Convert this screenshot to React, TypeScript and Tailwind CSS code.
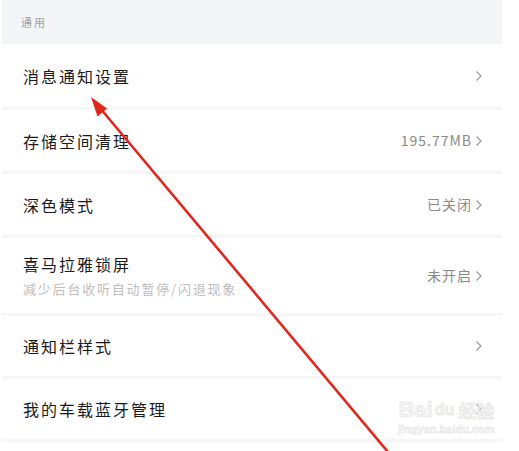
import React from 'react'

type Row = {
  title: string
  sub?: string
  value?: string
  h: string
}

const rows: Row[] = [
  { title: '消息通知设置', h: 'h-[66px]' },
  { title: '存储空间清理', value: '195.77MB', h: 'h-[64px]' },
  { title: '深色模式', value: '已关闭', h: 'h-[64px]' },
  { title: '喜马拉雅锁屏', sub: '减少后台收听自动暂停/闪退现象', value: '未开启', h: 'h-[78px]' },
  { title: '通知栏样式', h: 'h-[63px]' },
  { title: '我的车载蓝牙管理', h: 'h-[63px]' },
]

const font = { fontFamily: '"Noto Sans CJK SC", "Noto Sans", sans-serif' }

function Chevron() {
  return (
    <svg width="8" height="12" viewBox="0 0 8 12" className="shrink-0">
      <polyline points="1.5,1.5 6,6 1.5,10.5" fill="none" stroke="#9a9a9a" strokeWidth="1.2" />
    </svg>
  )
}

export default function App() {
  return (
    <div className="relative w-[519px] h-[451px] bg-white overflow-hidden" style={font}>
      <div className="ml-[2px] w-[500px]">
        <div className="h-[44px] bg-[#f4f5f7] flex items-center pl-[19px]">
          <span className="text-[11px] text-[#a0a0a0] tracking-[2px]">通用</span>
        </div>

        {rows.map((r, i) => (
          <div
            key={i}
            className={`${r.h} flex items-center justify-between pl-[21px] pr-[19px] border-b-[3px] border-[#f6f6f7]`}
          >
            <div className="flex flex-col">
              <span className="text-[16px] leading-[22px] text-[#1a1a1a] tracking-[2px]">{r.title}</span>
              {r.sub && (
                <span className="text-[13px] leading-[20px] mt-[4px] text-[#bdbdbd] tracking-[1.8px]">{r.sub}</span>
              )}
            </div>
            <div className="flex items-center gap-[3px]">
              {r.value && (
                <span className="text-[14px] text-[#8a8a8a] tracking-[1px]">{r.value}</span>
              )}
              <Chevron />
            </div>
          </div>
        ))}
      </div>

      {/* watermark */}
      <div className="absolute left-[398px] top-[398px] flex flex-col items-center pointer-events-none select-none">
        <div className="flex items-center text-[22px] leading-[24px] font-bold text-[#f4f4f4]" style={{ fontFamily: '"Liberation Sans", sans-serif', WebkitTextStroke: '0.5px #e0e0e0' }}>
          <span>Bai</span>
          <span className="ml-[2px] text-[16px]">du</span>
          <span className="ml-[4px] text-[18px]" style={font}>经验</span>
        </div>
        <span className="text-[11px] leading-[14px] font-bold text-[#f4f4f4]" style={{ fontFamily: '"Liberation Sans", sans-serif', WebkitTextStroke: '0.4px #e2e2e2' }}>
          jingyan.baidu.com
        </span>
      </div>

      {/* red arrow annotation */}
      <svg className="absolute inset-0 pointer-events-none" width="519" height="451" viewBox="0 0 519 451">
        <line x1="388" y1="452" x2="100" y2="108" stroke="#e1261c" strokeWidth="2.6" />
        <polygon points="91,97 97.5,116.5 107,108.5" fill="#e1261c" />
      </svg>
    </div>
  )
}
